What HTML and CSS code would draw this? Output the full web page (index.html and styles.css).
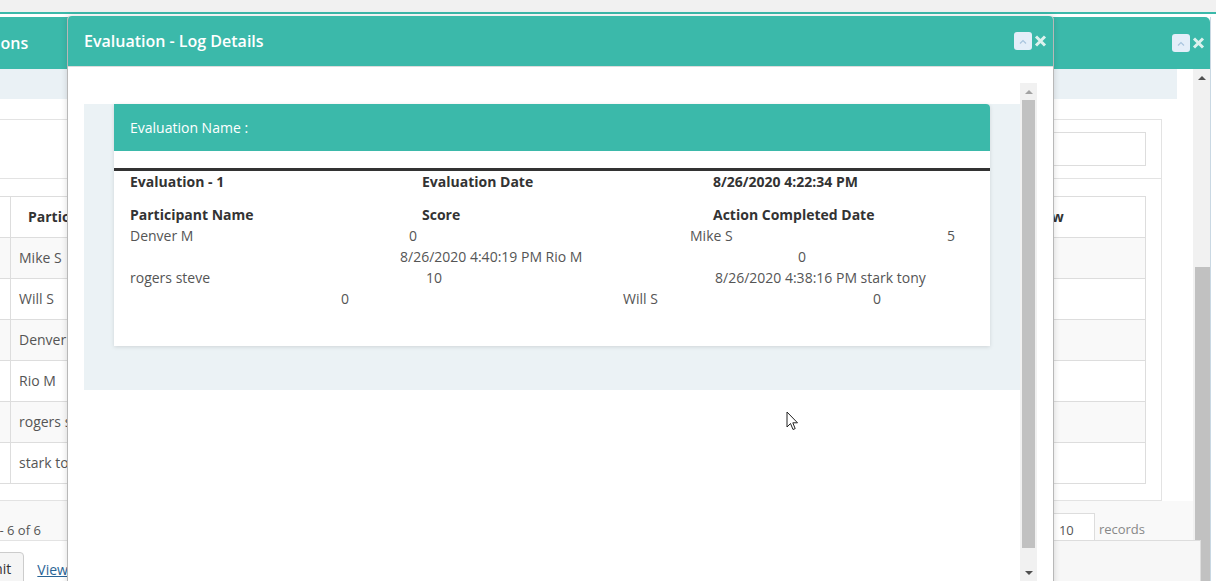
FILE: index.html
```html
<!DOCTYPE html>
<html lang="en">
<head>
  <meta charset="UTF-8">
  <meta name="viewport" content="width=device-width, initial-scale=1.0">
  <title>Evaluation - Log Details</title>
  <link rel="stylesheet" href="styles.css">
</head>
<body>
  <div class="topbar"></div>

  <!-- window behind -->
  <div class="back-win">
    <div class="win-head back-head">
      <span class="back-title">Evaluations</span>
      <div class="win-tools">
        <span class="tool-min"><svg width="8" height="5" viewBox="0 0 8 5"><polyline points="1,4.5 4,1.5 7,4.5" fill="none" stroke="#a9c4de" stroke-width="1.2"/></svg></span>
        <svg class="tool-close" width="13" height="12" viewBox="0 0 13 12"><path d="M2 1.5 L11 10.5 M11 1.5 L2 10.5" stroke="#dcf2ee" stroke-width="3"/></svg>
      </div>
    </div>
    <div class="back-body">
      <div class="back-main">
        <div class="back-strip"></div>
        <div class="back-panel">
          <div class="panel-top"><div class="search-box"></div></div>
          <table class="grid">
            <colgroup>
              <col class="c-sel"><col class="c-name"><col class="c-score"><col class="c-date"><col><col class="c-view">
            </colgroup>
            <thead>
              <tr><th></th><th>Participant Name</th><th>Score</th><th>Action Completed Date</th><th>Status</th><th>View</th></tr>
            </thead>
            <tbody>
              <tr><td></td><td>Mike S</td><td>5</td><td></td><td></td><td></td></tr>
              <tr><td></td><td>Will S</td><td>0</td><td></td><td></td><td></td></tr>
              <tr><td></td><td>Denver M</td><td>0</td><td></td><td></td><td></td></tr>
              <tr><td></td><td>Rio M</td><td>0</td><td></td><td></td><td></td></tr>
              <tr><td></td><td>rogers steve</td><td>10</td><td></td><td></td><td></td></tr>
              <tr><td></td><td>stark tony</td><td>0</td><td></td><td></td><td></td></tr>
            </tbody>
          </table>
        </div>
        <div class="pager">
          <span class="pager-info">Showing 1 - 6 of 6</span>
          <div class="pager-size">
            <div class="size-box">10<div class="size-drop"></div></div>
            <span class="size-label">records</span>
          </div>
        </div>
        <div class="actions">
          <span class="btn">Submit</span>
          <a class="link" href="#">View History</a>
        </div>
      </div>
      <div class="scrollbar back-scroll">
        <div class="sb-arrow"><span class="tri-up dark"></span></div>
        <div class="sb-gap back-gap"></div>
        <div class="sb-thumb back-thumb"></div>
      </div>
    </div>
  </div>

  <!-- front dialog -->
  <div class="modal">
    <div class="win-head modal-head">
      <span class="modal-title">Evaluation - Log Details</span>
      <div class="win-tools">
        <span class="tool-min"><svg width="8" height="5" viewBox="0 0 8 5"><polyline points="1,4.5 4,1.5 7,4.5" fill="none" stroke="#a9c4de" stroke-width="1.2"/></svg></span>
        <svg class="tool-close" width="13" height="12" viewBox="0 0 13 12"><path d="M2 1.5 L11 10.5 M11 1.5 L2 10.5" stroke="#dcf2ee" stroke-width="3"/></svg>
      </div>
    </div>
    <div class="modal-body">
      <div class="modal-scroll">
        <div class="log-panel">
          <div class="card">
            <div class="card-head">Evaluation Name :</div>
            <div class="card-body">
              <div class="info-row">
                <span>Evaluation - 1</span><span>Evaluation Date</span><span>8/26/2020 4:22:34 PM</span>
              </div>
              <div class="info-row second">
                <span>Participant Name</span><span>Score</span><span>Action Completed Date</span>
              </div>
              <div class="flow flow-1"><span>Denver M</span><span>0</span><span>Mike S</span><span>5</span></div>
              <div class="flow flow-2"><span>8/26/2020 4:40:19 PM Rio M</span><span>0</span></div>
              <div class="flow flow-3"><span>rogers steve</span><span>10</span><span>8/26/2020 4:38:16 PM stark tony</span></div>
              <div class="flow flow-4"><span>0</span><span>Will S</span><span>0</span></div>
            </div>
          </div>
        </div>
      </div>
      <div class="scrollbar modal-sb">
        <div class="sb-arrow"><span class="tri-up"></span></div>
        <div class="sb-thumb modal-thumb"></div>
        <div class="sb-gap"></div>
        <div class="sb-arrow"><span class="tri-down"></span></div>
      </div>
    </div>
  </div>

  <svg class="cursor" width="13" height="21" viewBox="0 0 13 21">
    <path d="M1 1 L1 16 L4.5 12.5 L7 18.5 L9.2 17.6 L6.8 11.8 L11.5 11.8 Z" fill="#fff" stroke="#222" stroke-width="1" stroke-linejoin="round"/>
  </svg>
</body>
</html>
```

FILE: styles.css
```css
html, body {
  margin: 0;
  padding: 0;
  height: 100%;
  overflow: hidden;
}
body {
  position: relative;
  font-family: "Open Sans", "Liberation Sans", sans-serif;
  font-size: 14px;
  color: #555;
  background: #fff;
}
.topbar {
  height: 12px;
  background: #f1f1f1;
  border-bottom: 2px solid #3bb9aa;
}

/* shared window header */
.win-head {
  display: flex;
  align-items: center;
  justify-content: space-between;
  background: #3bb9aa;
  color: #fff;
  font-size: 16px;
  font-weight: 600;
}
.win-tools {
  display: flex;
  align-items: center;
  gap: 2px;
}
.tool-min {
  display: flex;
  align-items: center;
  justify-content: center;
  width: 18px;
  height: 18px;
  background: #e4eef9;
  border-radius: 3px;
}
.tool-close {
  display: block;
}

/* back window */
.back-win {
  position: absolute;
  left: -120px;
  top: 17px;
  width: 1330px;
  bottom: -60px;
  background: #fff;
  border-right: 1px solid #c9d8e3;
  display: flex;
  flex-direction: column;
}
.back-head {
  height: 52px;
  padding: 0 5px 0 59px;
  border-top-right-radius: 5px;
}
.back-body {
  flex: 1;
  display: flex;
}
.back-main {
  flex: 1;
}
.back-strip {
  height: 30px;
  margin-right: 16px;
  background: #eaf1f5;
}
.back-panel {
  margin: 20px 31px 0 0;
  border: 1px solid #e3e3e3;
  border-left: none;
  padding: 0 15px 16px 16px;
}
.panel-top {
  height: 59px;
  margin: 0 -15px 0 -16px;
  padding: 12px 15px 0 16px;
  box-sizing: border-box;
  border-bottom: 1px solid #e3e3e3;
  display: flex;
  justify-content: flex-end;
}
.search-box {
  width: 300px;
  height: 34px;
  box-sizing: border-box;
  border: 1px solid #ddd;
}
.grid {
  width: 100%;
  margin-top: 17px;
  table-layout: fixed;
  border-collapse: collapse;
}
.c-sel { width: 114px; }
.c-name { width: 200px; }
.c-score { width: 250px; }
.c-date { width: 300px; }
.c-view { width: 133px; }
.grid th,
.grid td {
  border: 1px solid #ddd;
  height: 20px;
  padding: 10px 10px 10px 8px;
  line-height: 20px;
  text-align: left;
  white-space: nowrap;
  overflow: hidden;
}
.grid th {
  padding-left: 17px;
  color: #333;
  font-weight: 700;
}
.grid tbody tr:nth-child(odd) {
  background: #f9f9f9;
}
.pager {
  height: 39px;
  border-bottom: 1px solid #e3e3e3;
  background: #f9f9f9;
  display: flex;
  align-items: flex-end;
  justify-content: space-between;
  padding: 0 48px 0 54px;
  font-size: 13px;
}
.pager-info {
  line-height: 20px;
}
.pager-size {
  display: flex;
  align-items: flex-end;
  gap: 4px;
}
.size-box {
  position: relative;
  width: 44px;
  height: 27px;
  box-sizing: border-box;
  border: 1px solid #ddd;
  border-bottom: none;
  padding: 6px 0 0 7px;
  line-height: 20px;
  background: #fff;
}
.size-drop {
  position: absolute;
  left: -1px;
  top: 26px;
  width: 148px;
  height: 60px;
  background: #f7f7f7;
  border: 1px solid #ddd;
}
.size-label {
  color: #888;
  line-height: 20px;
  padding-bottom: 1px;
}
.actions {
  display: flex;
  align-items: center;
  gap: 13px;
  padding: 11px 0 0 72px;
}
.btn {
  padding: 6px 12px;
  line-height: 20px;
  border: 1px solid #ccc;
  border-radius: 4px;
  background: #f5f5f5;
  color: #333;
}
.link {
  color: #2a6496;
}

/* scrollbars */
.scrollbar {
  width: 17px;
  background: #f1f1f1;
  display: flex;
  flex-direction: column;
}
.sb-arrow {
  height: 17px;
  display: flex;
  align-items: center;
  justify-content: center;
}
.sb-gap {
  flex: 1;
}
.back-gap {
  flex: none;
  height: 181px;
}
.sb-thumb {
  margin: 0 2px;
  background: #c1c1c1;
}
.back-thumb {
  flex: 1;
  margin-right: 0;
}
.modal-thumb {
  height: 448px;
}
.tri-up {
  border-left: 4px solid transparent;
  border-right: 4px solid transparent;
  border-bottom: 4px solid #a3a3a3;
}
.tri-up.dark {
  border-bottom-color: #505050;
}
.tri-down {
  border-left: 4px solid transparent;
  border-right: 4px solid transparent;
  border-top: 4px solid #505050;
}

/* front dialog */
.modal {
  position: absolute;
  left: 67px;
  top: 16px;
  width: 985px;
  height: 620px;
  background: #fff;
  border: 1px solid #b8b8b8;
  border-top: none;
  border-radius: 4px 4px 0 0;
  box-shadow: 0 0 6px rgba(0, 0, 0, 0.15);
}
.modal-head {
  height: 50px;
  padding: 0 6px 0 16px;
  border-bottom: 1px solid #dcdcdc;
  border-radius: 4px 4px 0 0;
}
.modal-body {
  display: flex;
  height: 498px;
  padding: 16px 16px 0 16px;
}
.modal-scroll {
  flex: 1;
  padding-top: 21px;
}
.log-panel {
  background: #ebf2f5;
  padding: 0 30px 44px;
}
.card {
  background: #fff;
  border-radius: 0 4px 0 0;
  box-shadow: 0 1px 4px rgba(0, 0, 0, 0.12);
}
.card-head {
  height: 47px;
  line-height: 47px;
  padding-left: 16px;
  background: #3bb9aa;
  color: #fff;
  border-radius: 0 4px 0 0;
}
.card-body {
  margin-top: 17px;
  border-top: 3px solid #333;
  padding-bottom: 37px;
  line-height: 21px;
}
.info-row {
  display: grid;
  grid-template-columns: 292px 291px 1fr;
  padding: 0 16px;
  color: #333;
  font-weight: 700;
}
.info-row.second {
  margin-top: 12px;
}
.flow {
  display: grid;
  padding-left: 16px;
  white-space: nowrap;
}
.flow-1 { grid-template-columns: 279px 281px 257px auto; }
.flow-2 { grid-template-columns: 398px auto; padding-left: 286px; }
.flow-3 { grid-template-columns: 296px 289px auto; }
.flow-4 { grid-template-columns: 282px 250px auto; padding-left: 227px; }
.flow span:last-child {
  justify-self: start;
}

.cursor {
  position: absolute;
  left: 786px;
  top: 411px;
}
```
